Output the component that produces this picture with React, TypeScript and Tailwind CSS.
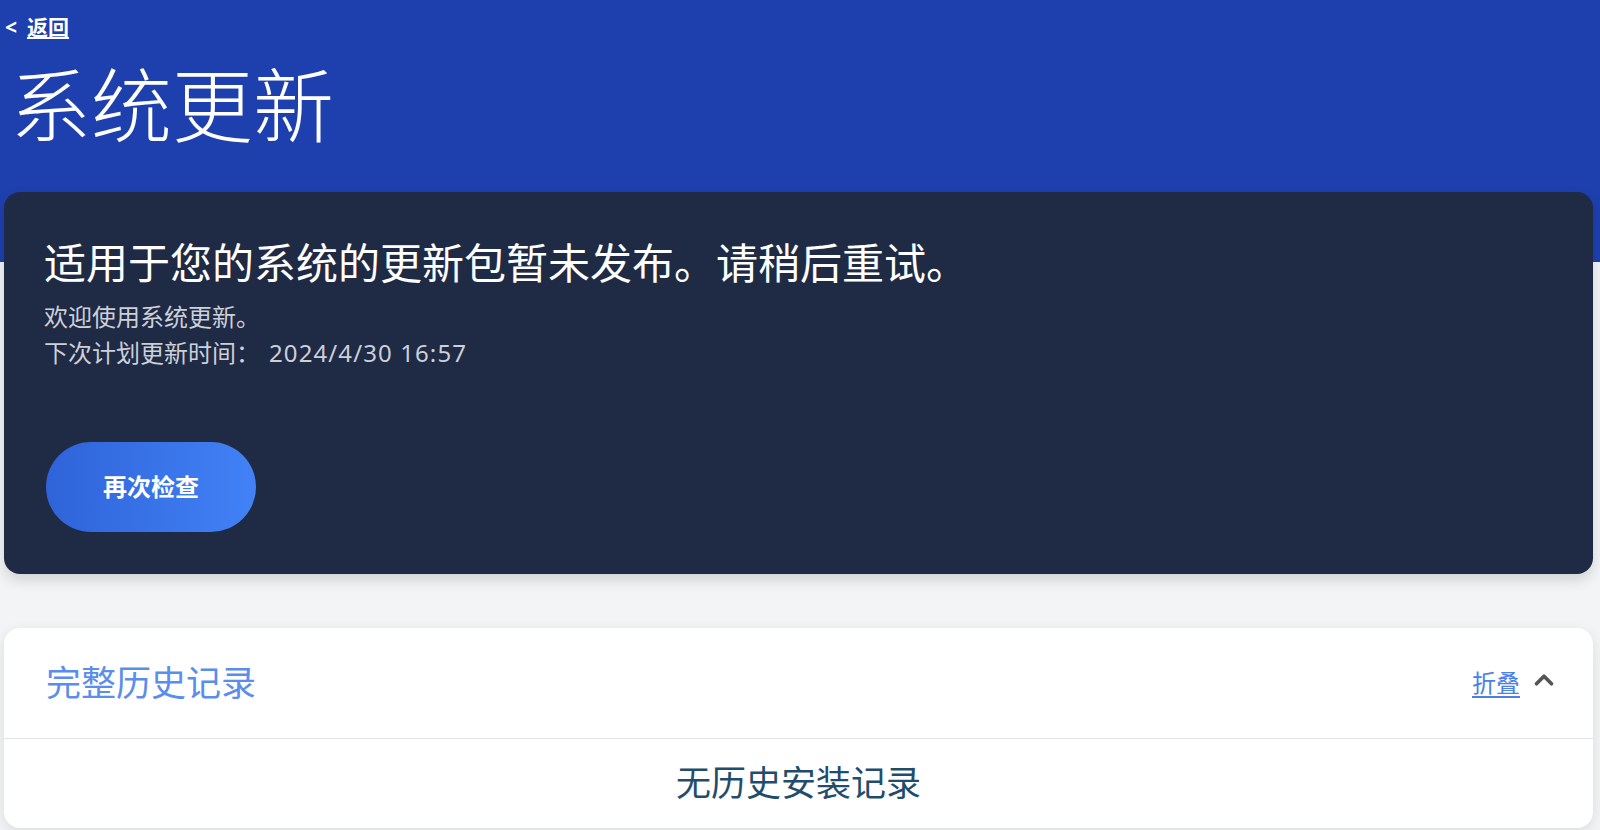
import { ChevronUp } from "lucide-react";

const font = { fontFamily: '"Noto Sans", "Noto Sans CJK SC", sans-serif' };

export default function App() {
  return (
    <div className="min-h-screen bg-[#f3f4f5]" style={font}>
      {/* Header */}
      <header className="h-[262px] bg-[#1e40af] text-white">
        <div className="pl-[5px] pt-[13px] text-[21px] font-bold leading-[28px]">
          <span className="mr-[10px]">&lt;</span>
          <a href="#" className="underline underline-offset-2">返回</a>
        </div>
        <h1 className="mt-[16px] pl-[10px] text-[81px] font-light leading-[96px]">系统更新</h1>
      </header>

      <main className="-mt-[70px] ml-[4px] mr-[7px] flex flex-col gap-[54px]">
        {/* Status card */}
        <section className="rounded-[16px] bg-[#1f2a44] pl-[40px] pt-[40px] pb-[42px] shadow-[0_6px_14px_rgba(0,0,0,0.14)]">
          <h2 className="text-[42px] leading-[62px] text-white">适用于您的系统的更新包暂未发布。请稍后重试。</h2>
          <div className="mt-[5px] text-[24px] leading-[36px] text-[#cbd0d9]">
            <p>欢迎使用系统更新。</p>
            <p>
              下次计划更新时间：<span className="ml-[9px] tracking-[1.1px]">2024/4/30 16:57</span>
            </p>
          </div>
          <button className="ml-[2px] mt-[71px] h-[90px] w-[210px] rounded-full bg-linear-to-r from-[#2f63d9] to-[#4282f6] text-[24px] font-bold text-white">
            再次检查
          </button>
        </section>

        {/* History card */}
        <section className="rounded-[16px] bg-white shadow-[0_4px_14px_rgba(0,0,0,0.10)]">
          <div className="flex h-[111px] items-center justify-between border-b border-[#e3e3e3] pl-[42px] pr-[34px]">
            <h3 className="text-[35px] text-[#5b8ded]">完整历史记录</h3>
            <div className="flex items-center gap-[9px]">
              <a href="#" className="text-[24px] text-[#4a80e8] underline underline-offset-4">折叠</a>
              <ChevronUp size={30} strokeWidth={3} className="-mt-[6px] text-[#555555]" />
            </div>
          </div>
          <div className="flex h-[89px] items-center justify-center text-[35px] text-[#1f4d6b]">
            无历史安装记录
          </div>
        </section>
      </main>
    </div>
  );
}
